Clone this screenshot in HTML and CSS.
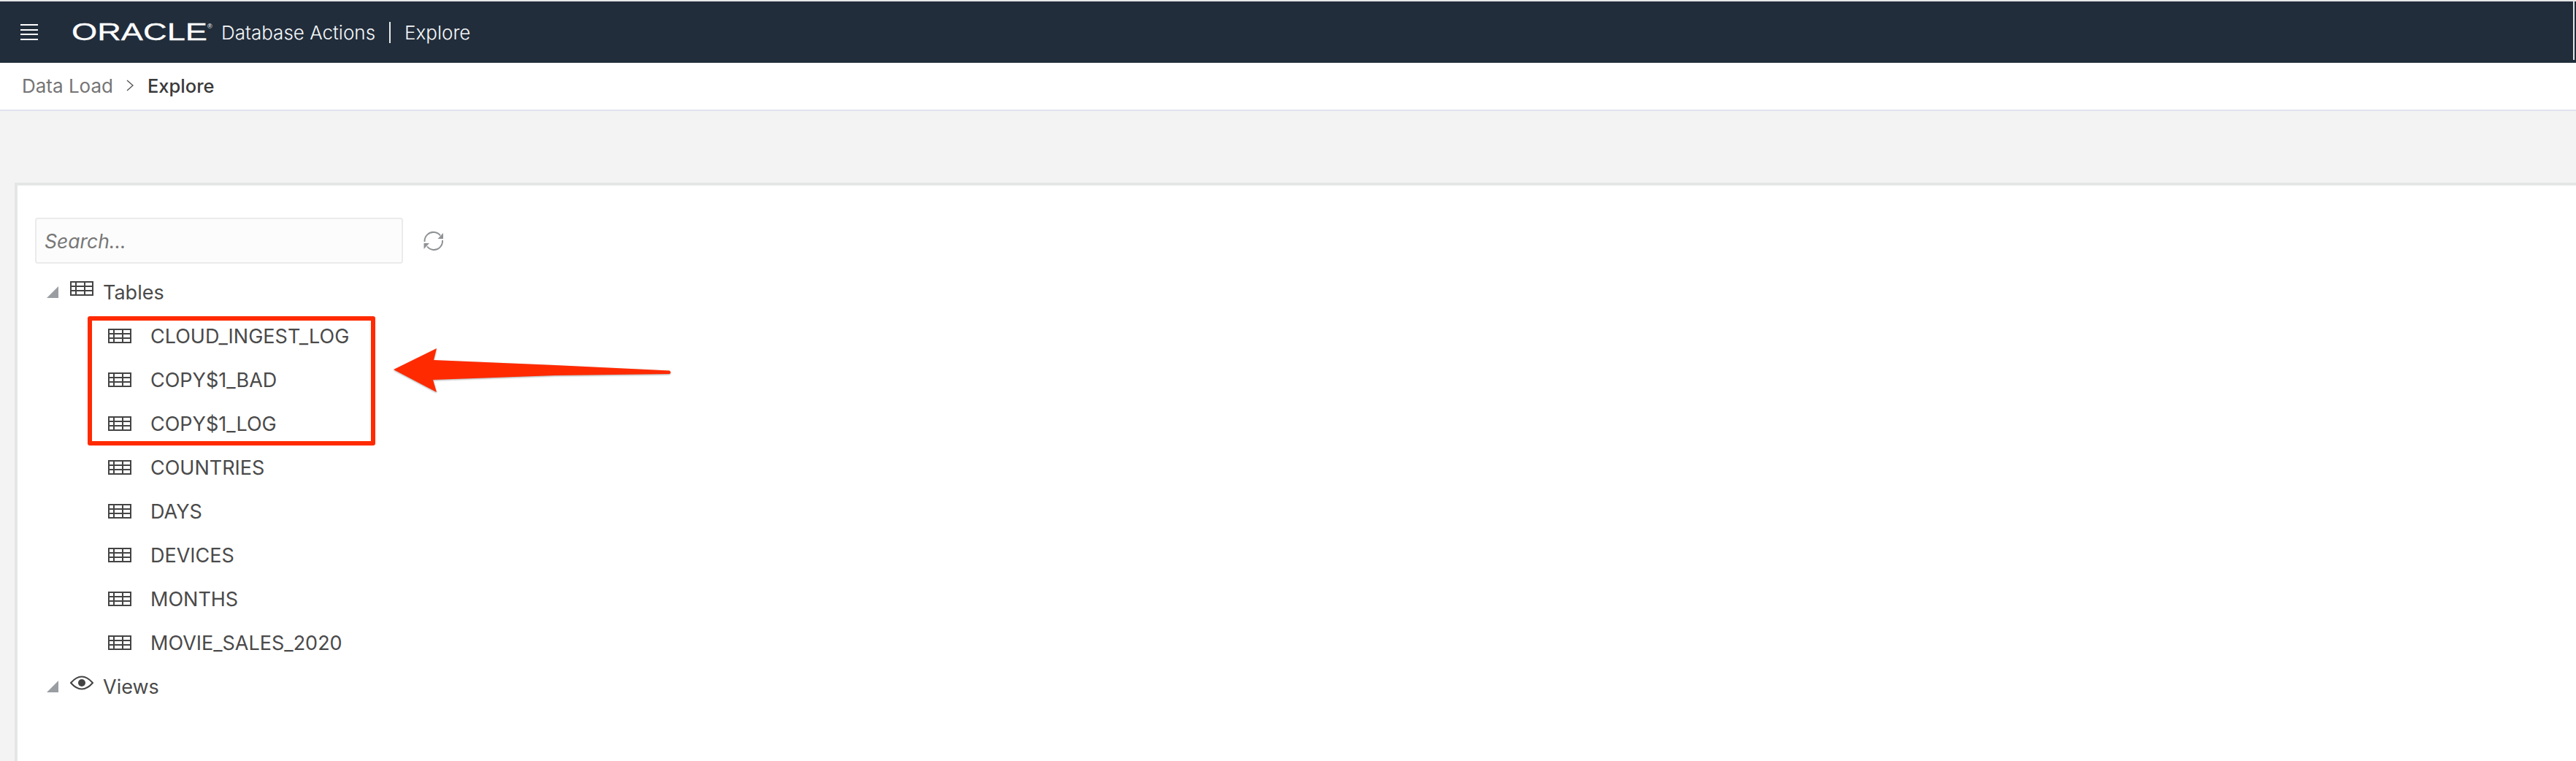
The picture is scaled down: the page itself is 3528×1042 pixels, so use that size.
FILE: index.html
```html
<!DOCTYPE html>
<html lang="en">
<head>
  <meta charset="UTF-8" />
  <meta name="viewport" content="width=device-width, initial-scale=1.0" />
  <title>Explore</title>
  <link rel="stylesheet" href="styles.css">
</head>

<body>
<header class="app-header">
  <button class="menu-button" aria-label="Menu">
    <span></span><span></span><span></span><span></span>
  </button>
  <svg class="oracle-logo" width="196" height="38" viewBox="0 0 196 38">
    <text x="0" y="31" textLength="186" lengthAdjust="spacingAndGlyphs">ORACLE</text>
    <text class="oracle-reg" x="186" y="15">®</text>
  </svg>
  <span class="app-name">Database Actions</span>
  <span class="app-divider"></span>
  <span class="app-page">Explore</span>
  <span class="header-scroll"></span>
</header>

<nav class="breadcrumb">
  <span class="crumb">Data Load</span>
  <svg class="crumb-chevron" width="10" height="16" viewBox="0 0 10 16">
    <path d="M1 1l8 7-8 7" fill="none" stroke="#555" stroke-width="1.4" />
  </svg>
  <span class="crumb crumb-current">Explore</span>
</nav>

<div class="toolbar-band"></div>

<main class="panel">
  <div class="search-row">
    <div class="search-box">Search...</div>
    <svg class="refresh-icon" width="30" height="28" viewBox="0 0 30 28">
      <path d="M2.5 15C2 7 9 1 16 2c3 .4 6 1.800 8 4.500M27 13c.5 8-6 14-13 13-3-.4-6-1.800-8-4.500" fill="none" stroke="#909396" stroke-width="2" />
      <path d="M28 3v8h-7.500zM1.500 25v-8h7.500z" fill="#909396" />
    </svg>
  </div>

  <ul class="tree">
    <li class="tree-row tree-parent">
      <span class="twisty"></span>
      <svg class="table-icon" width="32" height="20"><use href="#table" /></svg>
      <span class="tree-label">Tables</span>
    </li>
    <li class="tree-row tree-child">
      <svg class="table-icon" width="32" height="20"><use href="#table" /></svg>
      <span class="tree-label">CLOUD_INGEST_LOG</span>
    </li>
    <li class="tree-row tree-child">
      <svg class="table-icon" width="32" height="20"><use href="#table" /></svg>
      <span class="tree-label">COPY$1_BAD</span>
    </li>
    <li class="tree-row tree-child">
      <svg class="table-icon" width="32" height="20"><use href="#table" /></svg>
      <span class="tree-label">COPY$1_LOG</span>
    </li>
    <li class="tree-row tree-child">
      <svg class="table-icon" width="32" height="20"><use href="#table" /></svg>
      <span class="tree-label">COUNTRIES</span>
    </li>
    <li class="tree-row tree-child">
      <svg class="table-icon" width="32" height="20"><use href="#table" /></svg>
      <span class="tree-label">DAYS</span>
    </li>
    <li class="tree-row tree-child">
      <svg class="table-icon" width="32" height="20"><use href="#table" /></svg>
      <span class="tree-label">DEVICES</span>
    </li>
    <li class="tree-row tree-child">
      <svg class="table-icon" width="32" height="20"><use href="#table" /></svg>
      <span class="tree-label">MONTHS</span>
    </li>
    <li class="tree-row tree-child">
      <svg class="table-icon" width="32" height="20"><use href="#table" /></svg>
      <span class="tree-label">MOVIE_SALES_2020</span>
    </li>
    <li class="tree-row tree-parent">
      <span class="twisty"></span>
      <svg class="table-icon" width="32" height="20" viewBox="0 0 32 20">
        <path d="M1 10Q16-7 31 10Q16 27 1 10z" fill="none" stroke="#444" stroke-width="2" />
        <circle cx="16" cy="10" r="5" fill="#444" />
      </svg>
      <span class="tree-label">Views</span>
    </li>
  </ul>
</main>

<!-- Annotation -->
<div class="callout-box"></div>
<svg class="callout-arrow" width="390" height="70" viewBox="530 470 390 70">
  <path d="M539 506L598 477L594 493L760 500L917 507.5Q920 510 917 512L760 514L593 520L598 537Z" fill="#ff2a00" />
</svg>

<svg class="icon-defs" width="0" height="0">
  <symbol id="table" viewBox="0 0 32 20">
    <path d="M1 1h30v18H1zM1 7h30M1 13h30M8 1v18M20 1v18" fill="none" stroke="#444" stroke-width="2" />
  </symbol>
</svg>
</body>
</html>
```

FILE: styles.css
```css
* {
  box-sizing: border-box;
}

html,
body {
  margin: 0;
  height: 100%;
  overflow: hidden;
}

body {
  display: flex;
  flex-direction: column;
  position: relative;
  background-color: #f3f3f3;
  color: #4a4a4a;
  font-family: Inter, "Liberation Sans", sans-serif;
  font-size: 27px;
}

.app-header {
  display: flex;
  align-items: center;
  position: relative;
  flex: none;
  height: 86px;
  padding-left: 28px;
  border-top: 2px solid #e6e6e6;
  background-color: #212d3b;
  color: #ffffff;
}

.menu-button {
  display: flex;
  flex-direction: column;
  gap: 4.4px;
  width: 24px;
  padding: 0;
  margin-right: 46px;
  border: none;
  background: none;
}

.menu-button span {
  height: 2px;
  background-color: #ffffff;
}

.oracle-logo {
  margin-right: 9px;
  margin-top: -2px;
}

.oracle-logo text {
  fill: #ffffff;
  stroke: #ffffff;
  stroke-width: 0.3px;
  font-family: "Liberation Sans", sans-serif;
  font-size: 34px;
}

.oracle-logo .oracle-reg {
  font-size: 9px;
  stroke: none;
}

.app-name,
.app-page {
  font-size: 26px;
  font-weight: 300;
  color: #f6f7f8;
}

.app-divider {
  width: 2px;
  height: 29px;
  margin: 0 19px;
  background-color: #e8e8e8;
}

.header-scroll {
  position: absolute;
  top: 0;
  right: 2px;
  width: 2px;
  height: 80px;
  background-color: #e6e6e6;
}

.breadcrumb {
  display: flex;
  align-items: center;
  flex: none;
  height: 66px;
  padding: 0 0 2px 30px;
  border-bottom: 2px solid #e0e3ef;
  background-color: #ffffff;
  font-size: 26px;
}

.crumb {
  color: #757575;
}

.crumb-chevron {
  margin: 0 19px 0 18px;
}

.crumb-current {
  color: #3a3a3a;
  font-weight: 500;
  font-size: 25.5px;
}

.toolbar-band {
  flex: none;
  height: 98px;
}

.panel {
  flex: 1;
  margin-left: 20px;
  padding: 44px 0 0 24px;
  border-top: 4px solid #e4e6e5;
  border-left: 4px solid #e4e6e5;
  background-color: #ffffff;
}

.search-row {
  display: flex;
  align-items: center;
  gap: 27px;
  margin-bottom: 9px;
}

.search-box {
  display: flex;
  align-items: center;
  width: 504px;
  height: 63px;
  padding-left: 11px;
  border: 2px solid #ebebeb;
  border-radius: 4px;
  background-color: #fcfcfc;
  color: #777777;
  font-size: 26.5px;
  font-style: italic;
}

.tree {
  margin: 0;
  padding: 0;
  list-style: none;
}

.tree-row {
  display: flex;
  align-items: center;
  height: 60px;
}

.tree-parent {
  padding-left: 16px;
}

.tree-parent .table-icon {
  margin: -10px 13px 0 16px;
}

.tree-child {
  padding-left: 100px;
}

.tree-child .table-icon {
  margin-right: 26px;
}

.twisty {
  width: 16px;
  height: 16px;
  background-color: #9a9da1;
  clip-path: polygon(100% 0, 100% 100%, 0 100%);
}

.icon-defs {
  position: absolute;
}

.callout-box {
  position: absolute;
  left: 120px;
  top: 433px;
  width: 394px;
  height: 177px;
  border: 6px solid #ff2a00;
  border-radius: 3px;
}

.callout-arrow {
  position: absolute;
  left: 530px;
  top: 470px;
  filter: drop-shadow(0 1px 1px rgba(0, 0, 0, 0.35));
}
```
